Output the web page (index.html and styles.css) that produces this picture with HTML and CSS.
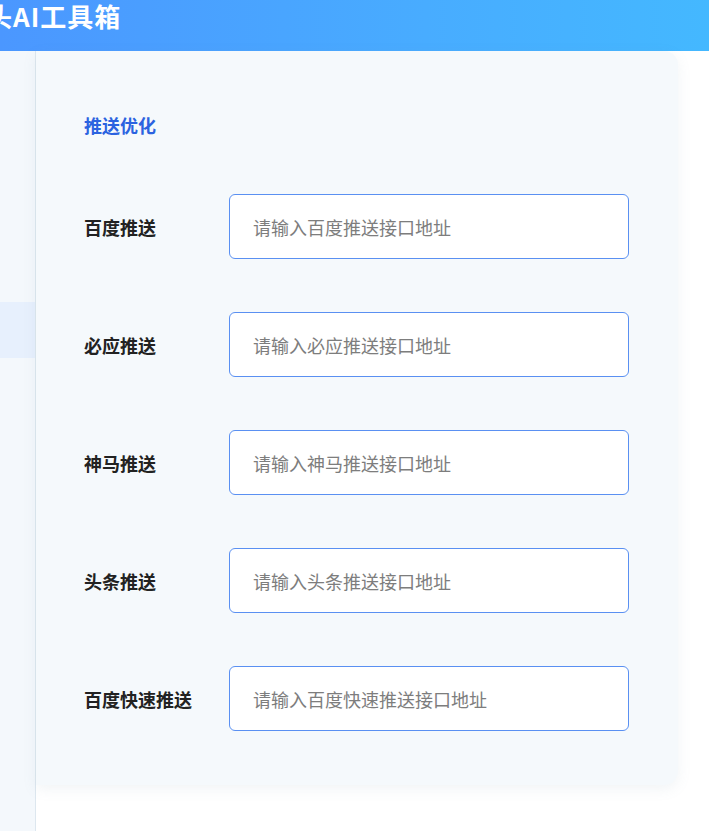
FILE: index.html
```html
<!DOCTYPE html>
<html lang="zh">
<head>
<meta charset="utf-8">
<title>AI工具箱</title>
<link rel="stylesheet" href="styles.css">
</head>
<body>
<header class="topbar">
  <h1 class="brand">头AI工具箱</h1>
</header>
<div class="main">
  <aside class="sidebar">
    <div class="side-item"></div>
    <div class="side-item active"></div>
  </aside>
  <section class="card">
    <h2 class="section-title">推送优化</h2>
    <div class="rows">
      <div class="row"><label class="label">百度推送</label><input class="field" placeholder="请输入百度推送接口地址"></div>
      <div class="row"><label class="label">必应推送</label><input class="field" placeholder="请输入必应推送接口地址"></div>
      <div class="row"><label class="label">神马推送</label><input class="field" placeholder="请输入神马推送接口地址"></div>
      <div class="row"><label class="label">头条推送</label><input class="field" placeholder="请输入头条推送接口地址"></div>
      <div class="row"><label class="label">百度快速推送</label><input class="field" placeholder="请输入百度快速推送接口地址"></div>
    </div>
  </section>
</div>
</body>
</html>
```
FILE: styles.css
```css
* { box-sizing: border-box; }
html, body { margin: 0; padding: 0; }
body {
  font-family: "Noto Sans CJK SC", "Noto Sans", sans-serif;
  background: #ffffff;
  width: 709px;
  height: 831px;
  overflow: hidden;
}
.topbar {
  height: 51px;
  background: linear-gradient(90deg, #4b97ff 0%, #48acff 60%, #44b8ff 100%);
  overflow: hidden;
}
.brand {
  margin: 0 0 0 -14px;
  font-size: 26px;
  line-height: 32px;
  letter-spacing: 1px;
  font-weight: 700;
  color: #ffffff;
  white-space: nowrap;
}
.main {
  display: flex;
  height: 780px;
}
.sidebar {
  width: 36px;
  flex: none;
  background: #f4f8fc;
  border-right: 1px solid #dde7ef;
  padding-top: 251px;
  display: flex;
  flex-direction: column;
}
.side-item { height: 0; }
.side-item.active {
  height: 56px;
  background: #e7f0fd;
}
.card {
  width: 642px;
  height: 734px;
  background: #f5f9fc;
  border-radius: 0 14px 14px 0;
  box-shadow: 0 4px 14px rgba(120, 150, 170, 0.10);
  padding: 62px 48px 0 48px;
}
.section-title {
  margin: 0;
  font-size: 18px;
  line-height: 24px;
  font-weight: 700;
  color: #2b63e0;
}
.rows {
  margin-top: 57px;
  display: flex;
  flex-direction: column;
  gap: 53px;
}
.row {
  display: flex;
  align-items: center;
}
.label {
  width: 145px;
  flex: none;
  font-size: 18px;
  font-weight: 700;
  color: #222222;
}
.field {
  width: 400px;
  height: 65px;
  border: 1px solid #5a90f2;
  border-radius: 6px;
  background: #ffffff;
  padding: 0 23px;
  font-family: inherit;
  font-size: 18px;
  color: #333;
  outline: none;
}
.field::placeholder { color: #7d7d7d; }
```
